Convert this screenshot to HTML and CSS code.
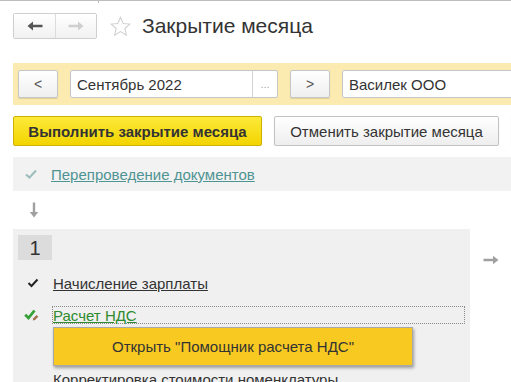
FILE: index.html
```html
<!DOCTYPE html>
<html lang="ru">
<head>
    <meta charset="UTF-8">
    <title>Закрытие месяца</title>
    <link rel="stylesheet" href="styles.css">
</head>
<body>
    <div class="topline"><span class="tab-edge"></span></div>

    <header class="head">
        <div class="nav">
            <button class="nav-btn">
                <svg width="16" height="10" viewBox="0 0 16 10"><path d="M0.5 5 L6 0.5 V3.8 H15.5 V6.2 H6 V9.5 Z" fill="#555"/></svg>
            </button>
            <button class="nav-btn">
                <svg width="16" height="10" viewBox="0 0 16 10"><path d="M15.5 5 L10 0.5 V3.8 H0.5 V6.2 H10 V9.5 Z" fill="#cfcfcf"/></svg>
            </button>
        </div>
        <svg class="star" width="21" height="21" viewBox="0 0 20 20"><polygon points="10,1.3 12.6,7.1 18.9,7.7 14.1,11.9 15.6,18.2 10,14.9 4.4,18.2 5.9,11.9 1.1,7.7 7.4,7.1" fill="none" stroke="#cfcfcf" stroke-width="1"/></svg>
        <h1>Закрытие месяца</h1>
    </header>

    <div class="period-bar">
        <button class="small-btn">&lt;</button>
        <div class="field date">
            <span class="field-text">Сентябрь 2022</span>
            <span class="field-pick">...</span>
        </div>
        <button class="small-btn">&gt;</button>
        <div class="field org">
            <span class="field-text">Василек ООО</span>
        </div>
    </div>

    <div class="actions">
        <button class="btn primary">Выполнить закрытие месяца</button>
        <button class="btn cancel">Отменить закрытие месяца</button>
        <button class="btn more"></button>
    </div>

    <div class="stage-done">
        <svg class="icon" width="14" height="12" viewBox="0 0 14 12"><polyline points="2,6.5 5.5,9.5 12,2.5" fill="none" stroke="#9dbcbc" stroke-width="2"/></svg>
        <a class="link done-link" href="#">Перепроведение документов</a>
    </div>

    <div class="step-arrow">
        <svg width="10" height="16" viewBox="0 0 10 16"><path d="M5 15.5 L0.8 10 H3.8 V0.5 H6.2 V10 H9.2 Z" fill="#a0a0a0"/></svg>
    </div>

    <div class="groups">
        <div class="group">
            <div class="group-num">1</div>

            <div class="row">
                <span class="row-icon">
                    <svg width="12" height="10" viewBox="0 0 12 10"><polyline points="1.5,5 4.5,8 10.5,1.5" fill="none" stroke="#222" stroke-width="2"/></svg>
                </span>
                <a class="link plain" href="#">Начисление зарплаты</a>
            </div>

            <div class="row current">
                <span class="row-icon green-icon">
                    <svg width="15" height="12" viewBox="0 0 15 12"><polyline points="1.2,5.8 4.5,9 10.5,1.5" fill="none" stroke="#35a035" stroke-width="2.8"/><path d="M8.8 11.5 L9.3 9.3 L12.6 6 L14.3 7.7 L11 11 Z" fill="#a26e4c"/></svg>
                </span>
                <span class="focus"><a class="link green" href="#">Расчет НДС</a></span>
                <div class="popup">Открыть "Помощник расчета НДС"</div>
            </div>

            <div class="row">
                <span class="row-icon"></span>
                <span class="row-text">Корректировка стоимости номенклатуры</span>
            </div>
        </div>
        <div class="next-arrow">
            <svg width="16" height="10" viewBox="0 0 16 10"><path d="M15.5 5 L10 0.8 V3.8 H0.5 V6.2 H10 V9.2 Z" fill="#a0a0a0"/></svg>
        </div>
    </div>
</body>
</html>
```

FILE: styles.css
```css
html, body {
    overflow: hidden;
}
body {
    margin: 0;
    font-family: 'Liberation Sans', Arial, sans-serif;
    font-size: 15px;
    color: #333;
    background: #fff;
}

/* верхняя кромка вкладки */
.topline {
    height: 3px;
    border-top: 1px solid #bdbdbd;
    box-sizing: border-box;
}
.tab-edge {
    display: block;
    width: 98px;
    height: 3px;
    margin-top: -1px;
    border-right: 1px solid #bdbdbd;
}

/* заголовок */
.head {
    display: flex;
    align-items: center;
    padding: 10px 0 0 13px;
    height: 26px;
}
.nav {
    display: flex;
    border: 1px solid #cfcfcf;
    border-radius: 2px;
}
.nav-btn {
    width: 41px;
    height: 24px;
    border: none;
    padding: 0;
    display: flex;
    align-items: center;
    justify-content: center;
    background: linear-gradient(#ffffff, #f1f1f1);
}
.nav-btn + .nav-btn {
    border-left: 1px solid #dcdcdc;
}
.star {
    margin-left: 13px;
    margin-top: 1px;
}
.head h1 {
    margin: 0 0 0 11px;
    font-size: 21px;
    font-weight: normal;
    color: #333;
}

/* период и организация */
.period-bar {
    display: flex;
    align-items: center;
    margin: 24px 0 0 13px;
    height: 42px;
    padding-left: 5px;
    background: #fbebb0;
    overflow: hidden;
}
.small-btn {
    flex: none;
    width: 40px;
    height: 28px;
    padding: 0;
    font-family: inherit;
    font-size: 14px;
    color: #555;
    border: 1px solid #c6c6c6;
    border-radius: 2px;
    background: linear-gradient(#ffffff, #efefef);
    box-shadow: 0 1px 1px rgba(0,0,0,0.12);
}
.field {
    flex: none;
    display: flex;
    height: 28px;
    box-sizing: border-box;
    margin: 0 12px;
    border: 1px solid #c6c6c6;
    border-radius: 2px;
    background: #fff;
}
.field-text {
    display: flex;
    align-items: center;
    padding-left: 6px;
    font-size: 15px;
    color: #333;
}
.date .field-text {
    width: 175px;
}
.field-pick {
    width: 24px;
    border-left: 1px solid #d4d4d4;
    color: #aaa;
    font-size: 11px;
    display: flex;
    align-items: center;
    justify-content: center;
}
.org {
    width: 220px;
    margin-right: 0;
}

/* кнопки действий */
.actions {
    display: flex;
    gap: 12px;
    margin: 11px 0 0 13px;
    overflow: hidden;
}
.btn {
    flex: none;
    height: 30px;
    padding: 0;
    font-family: inherit;
    font-size: 15px;
    color: #333;
    border: 1px solid #c2c2c2;
    border-radius: 2px;
    background: linear-gradient(#ffffff, #eeeeee);
    box-shadow: 0 1px 1px rgba(0,0,0,0.12);
}
.btn.primary {
    width: 249px;
    font-weight: bold;
    color: #333;
    border-color: #cdb100;
    background: linear-gradient(#fdea3a, #f3d400);
}
.btn.cancel {
    width: 225px;
}
.btn.more {
    width: 60px;
}

/* выполненный этап */
.stage-done {
    display: flex;
    align-items: center;
    height: 34px;
    margin: 11px 0 0 13px;
    background: #f2f2f2;
}
.stage-done .icon {
    margin: 0 13px 0 11px;
}
.link {
    text-decoration: underline;
}
.done-link {
    color: #4f9494;
}
.plain {
    color: #333;
}
.green {
    color: #2e8b2e;
}

.step-arrow {
    height: 38px;
    display: flex;
    align-items: center;
    padding-left: 29px;
    box-sizing: border-box;
}

/* группа этапов */
.groups {
    display: flex;
    margin-left: 13px;
}
.group {
    width: 457px;
    background: #f0f0f0;
    padding: 6px 5px 0;
    box-sizing: border-box;
    height: 200px;
}
.group-num {
    width: 34px;
    height: 25px;
    background: #dcdcdc;
    font-size: 20px;
    line-height: 26px;
    text-align: center;
    color: #333;
}
.group-num + .row {
    margin-top: 7px;
}
.row {
    position: relative;
    display: flex;
    align-items: center;
    height: 32px;
}
.row.current {
    margin-bottom: 32px;
}
.row-icon {
    width: 35px;
    flex: none;
    display: flex;
    padding-left: 9px;
    box-sizing: border-box;
}
.row-icon.green-icon {
    padding-left: 6px;
}
.row-text {
    color: #333;
}
.focus {
    flex: 1;
    height: 18px;
    margin-left: -1px;
    border: 1px dotted #8a8a8a;
    box-sizing: border-box;
    display: flex;
    align-items: center;
}
.popup {
    position: absolute;
    z-index: 2;
    left: 35px;
    top: 28px;
    width: 360px;
    height: 39px;
    box-sizing: border-box;
    border: 1px solid #a8a8a8;
    background: #f8c921;
    box-shadow: 1px 2px 3px rgba(0,0,0,0.35);
    display: flex;
    align-items: center;
    justify-content: center;
    font-size: 15px;
    color: #333;
}
.next-arrow {
    margin-left: 13px;
    padding-top: 22px;
}
```
